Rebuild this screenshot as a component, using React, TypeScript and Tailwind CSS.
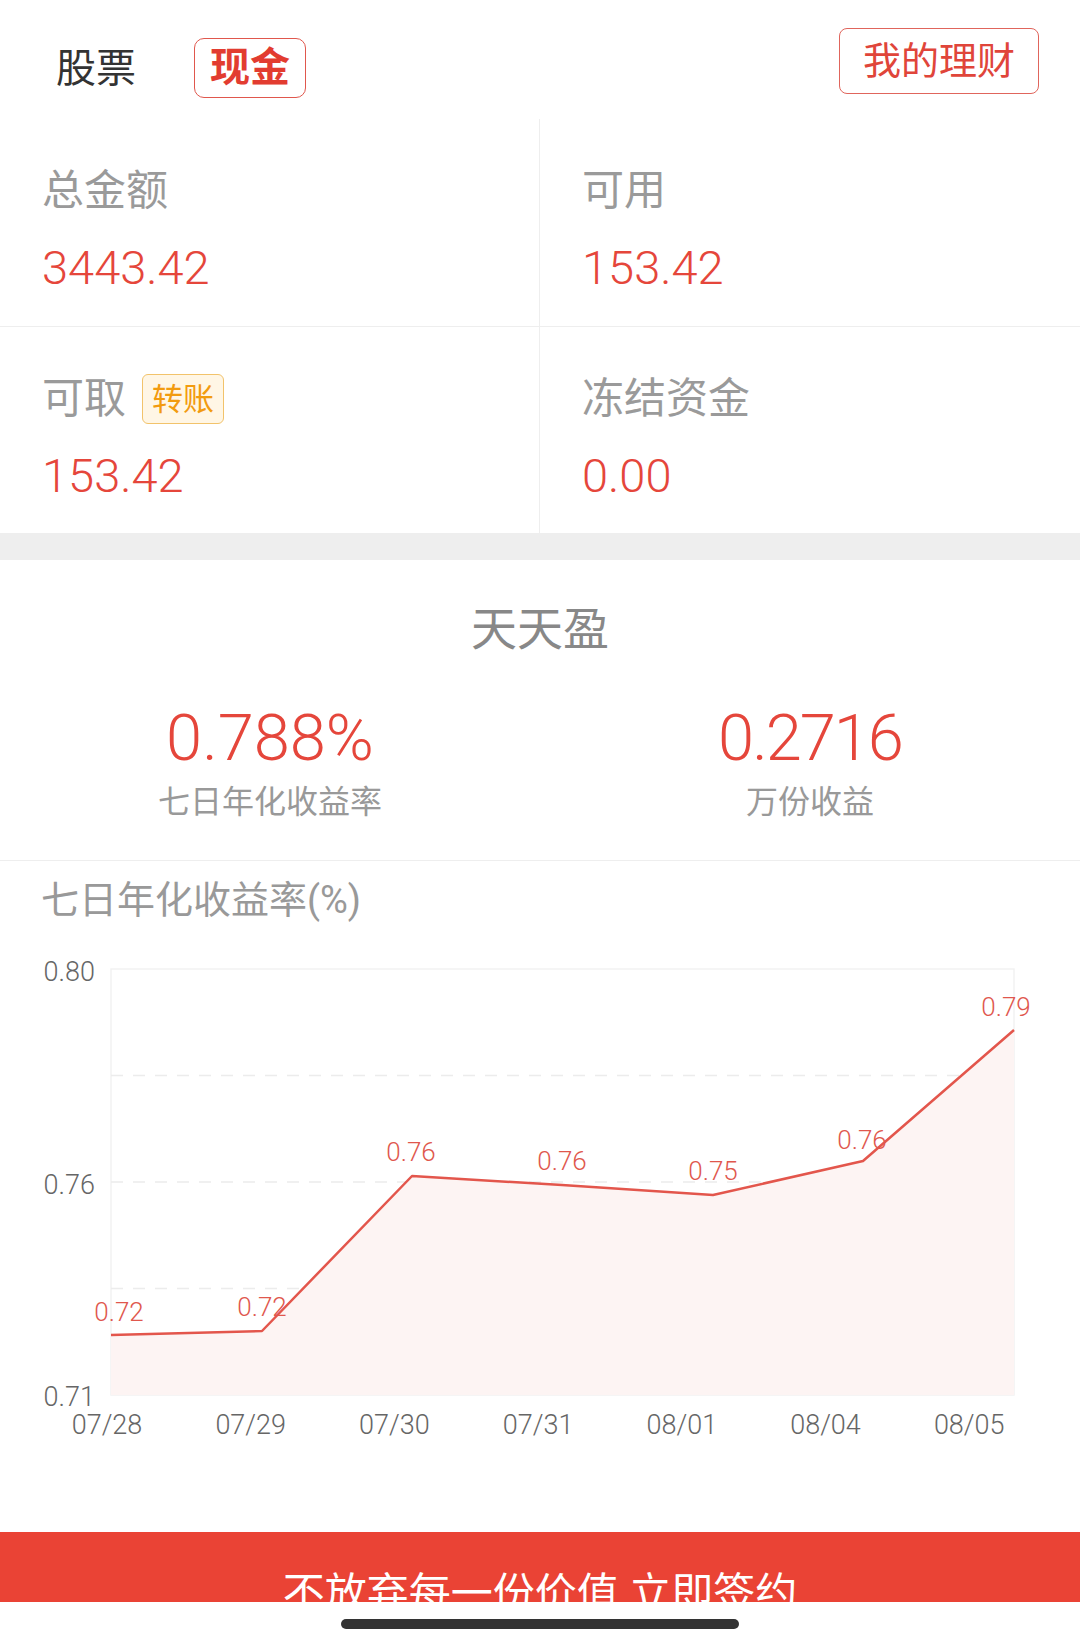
import React from "react";

const points: [number, number][] = [
    [111, 1335],
    [262, 1331],
    [412, 1176],
    [562, 1185],
    [713, 1195],
    [863, 1161],
    [1014, 1030],
];

const valueLabels = [
    { text: "0.72", x: 119, y: 1321 },
    { text: "0.72", x: 262, y: 1316 },
    { text: "0.76", x: 411, y: 1161 },
    { text: "0.76", x: 562, y: 1170 },
    { text: "0.75", x: 713, y: 1180 },
    { text: "0.76", x: 862, y: 1149 },
    { text: "0.79", x: 1006, y: 1016 },
];

const dates = ["07/28", "07/29", "07/30", "07/31", "08/01", "08/04", "08/05"];

const YieldChart = () => {
    const line = points.map(([x, y]) => `${x},${y}`).join(" ");
    const area = `${line} 1014,1395 111,1395`;
    return (
        <svg width="1080" height="615" viewBox="0 917 1080 615" className="block font-light">
            <rect x="111" y="969" width="903" height="426" fill="none" stroke="#f2f2f2" strokeWidth="1.5" />
            {[1075.5, 1182, 1288.5].map((y) => (
                <line key={y} x1="111" x2="1014" y1={y} y2={y} stroke="#ececec" strokeWidth="1.5" strokeDasharray="12 10" />
            ))}
            <polygon points={area} fill="#fdf4f3" />
            <polyline points={line} fill="none" stroke="#e3564c" strokeWidth="2.5" strokeLinejoin="round" />
            {valueLabels.map((l, i) => (
                <text key={i} x={l.x} y={l.y} textAnchor="middle" fontSize="26" fill="#e0574d">
                    {l.text}
                </text>
            ))}
            <text x="95" y="981" textAnchor="end" fontSize="27" fill="#666">0.80</text>
            <text x="95" y="1194" textAnchor="end" fontSize="27" fill="#666">0.76</text>
            <text x="95" y="1406" textAnchor="end" fontSize="27" fill="#666">0.71</text>
            {dates.map((d, i) => (
                <text key={d} x={107 + i * 143.7} y="1434" textAnchor="middle" fontSize="27" fill="#666">
                    {d}
                </text>
            ))}
        </svg>
    );
};

const Cell = ({ label, value, badge, right, last }: { label: string; value: string; badge?: string; right?: boolean; last?: boolean }) => (
    <div
        className={`pl-[42px] pt-[51px] border-[#eeeeee] ${right ? "" : "border-r"} ${last ? "h-[206px]" : "h-[208px] border-b"}`}
    >
        <div className="flex items-center gap-[16px] h-[42px]">
            <span className="text-[42px] leading-none text-[#9a9a9a]">{label}</span>
            {badge && (
                <span className="h-[50px] px-[9px] flex items-center border border-[#f2c36b] bg-[#fff6e5] rounded-[6px] text-[31px] leading-none text-[#f29b0f]">
                    {badge}
                </span>
            )}
        </div>
        <div className="mt-[32px] text-[47px] font-light leading-none text-[#e5463b]">{value}</div>
    </div>
);

export default function App() {
    return (
        <div className="w-[1080px] h-[1646px] bg-white overflow-hidden font-['Roboto','Noto_Sans_CJK_SC',sans-serif]">
            <div className="h-[119px] flex justify-between">
                <div className="flex items-start pl-[56px] pt-[38px] gap-[58px]">
                    <span className="mt-[11px] text-[40px] leading-none text-[#333]">股票</span>
                    <span className="h-[60px] px-[15px] flex items-center border border-[#e0574d] rounded-[10px] text-[40px] font-bold leading-none text-[#e23c30]">
                        现金
                    </span>
                </div>
                <div className="pr-[41px] pt-[28px]">
                    <span className="h-[66px] px-[23px] flex items-center border border-[#e0655c] rounded-[8px] text-[38px] leading-none text-[#e0453a]">
                        我的理财
                    </span>
                </div>
            </div>

            <div className="grid grid-cols-2">
                <Cell label="总金额" value="3443.42" />
                <Cell label="可用" value="153.42" right />
                <Cell label="可取" value="153.42" badge="转账" last />
                <Cell label="冻结资金" value="0.00" right last />
            </div>

            <div className="h-[27px] bg-[#eeeeee]" />

            <div className="h-[301px] pt-[46px] border-b border-[#eeeeee]">
                <div className="text-center text-[46px] leading-none text-[#888]">天天盈</div>
                <div className="grid grid-cols-2 mt-[54px]">
                    <div className="flex flex-col items-center">
                        <span className="text-[65px] font-light leading-none text-[#e5463b]">0.788%</span>
                        <span className="mt-[15px] text-[32px] leading-none text-[#999]">七日年化收益率</span>
                    </div>
                    <div className="flex flex-col items-center">
                        <span className="text-[65px] font-light leading-none tracking-[-2px] text-[#e5463b]">0.2716</span>
                        <span className="mt-[15px] text-[32px] leading-none text-[#999]">万份收益</span>
                    </div>
                </div>
            </div>

            <div className="h-[56px] pt-[20px] pl-[41px] text-[38px] leading-none text-[#999]">七日年化收益率(%)</div>

            <YieldChart />

            <div className="h-[70px] overflow-hidden bg-[#ea4335] pt-[41px] text-center text-[42px] leading-none text-white whitespace-nowrap">
                不放弃每一份价值 立即签约
            </div>
            <div className="h-[44px] flex justify-center pt-[17px]">
                <div className="w-[398px] h-[10px] rounded-full bg-[#333]" />
            </div>
        </div>
    );
}
